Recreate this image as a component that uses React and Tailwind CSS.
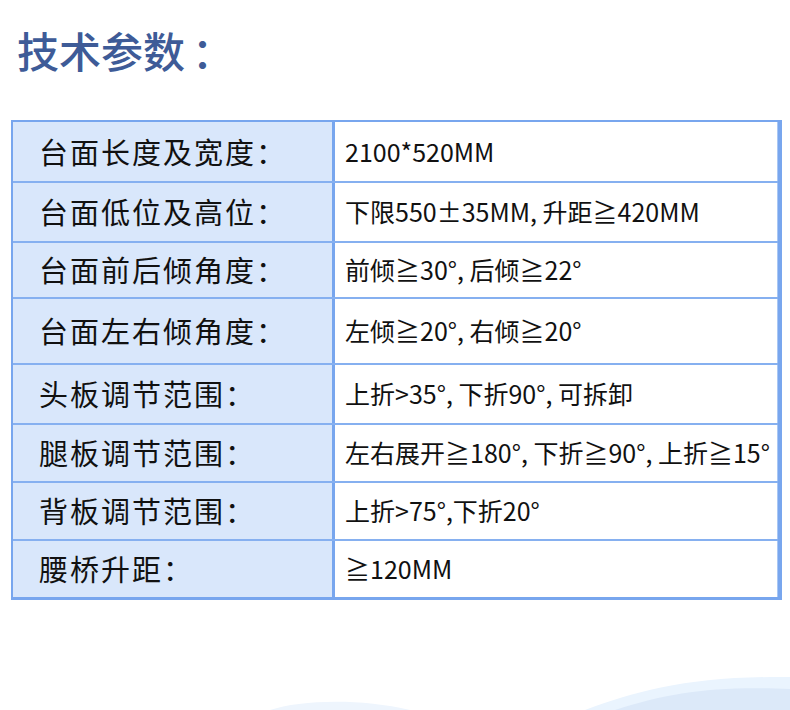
const rows = [
  { label: "台面长度及宽度：", value: "2100*520MM", h: "h-[61px]" },
  { label: "台面低位及高位：", value: "下限550±35MM, 升距≧420MM", h: "h-[60px]" },
  { label: "台面前后倾角度：", value: "前倾≧30°, 后倾≧22°", h: "h-[56px]" },
  { label: "台面左右倾角度：", value: "左倾≧20°, 右倾≧20°", h: "h-[66px]" },
  { label: "头板调节范围：", value: "上折>35°, 下折90°, 可拆卸", h: "h-[60px]" },
  { label: "腿板调节范围：", value: "左右展开≧180°, 下折≧90°, 上折≧15°", h: "h-[58px]" },
  { label: "背板调节范围：", value: "上折>75°,下折20°", h: "h-[58px]" },
  { label: "腰桥升距：", value: "≧120MM", h: "h-[56px]" },
];

export default function App() {
  return (
    <div className="relative w-[790px] h-[710px] overflow-hidden bg-white font-['Noto_Sans_CJK_SC',sans-serif]">
      <h1 className="pt-[29px] pl-[17px] text-[42px] leading-none font-medium text-[#3e5b97]">
        技术参数<span className="ml-[7px]">：</span>
      </h1>

      {/* Table */}
      <div className="mt-[49px] ml-[11px] w-[771px] border-2 border-b-[3px] border-r-4 border-[#78a6ee]">
        {rows.map((row, i) => (
          <div
            key={row.label}
            className={`flex ${row.h} ${i < rows.length - 1 ? "border-b-2 border-[#86b0f0]" : ""}`}
          >
            <div className="w-[322px] shrink-0 flex items-center pl-[26px] bg-[#d9e7fb] border-r-[3px] border-[#78a6ee] text-[29px] tracking-[2px] text-[#111]">
              {row.label}
            </div>
            <div className="flex-1 flex items-center pl-[10px] border-r border-[#a9c7f4] text-[25px] text-[#111] whitespace-pre">
              {row.value}
            </div>
          </div>
        ))}
      </div>

      {/* Bottom waves */}
      <svg className="absolute left-0 bottom-0" width="790" height="60" viewBox="0 650 790 60">
        <path d="M270 710 C300 700, 360 698, 410 710 Z" fill="#eef5fd" />
        <path d="M585 710 C640 690, 690 676, 790 677 L790 710 Z" fill="#eaf4fe" />
        <path d="M615 710 C670 692, 715 686, 790 689 L790 710 Z" fill="#dce9f9" />
      </svg>
    </div>
  );
}
